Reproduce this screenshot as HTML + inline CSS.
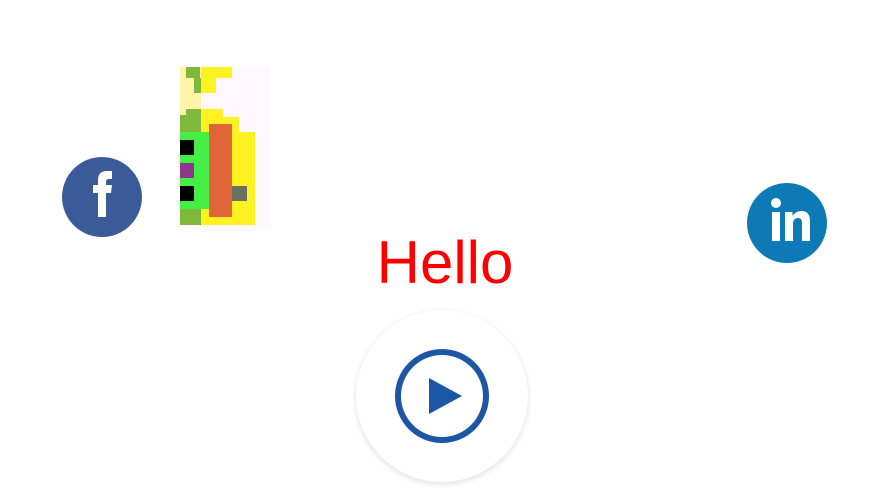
<!DOCTYPE html>
<html><head><style>
html,body{margin:0;padding:0;background:#fff;width:882px;height:504px;overflow:hidden;position:relative;font-family:"Liberation Sans",sans-serif}
.a{position:absolute}
</style></head><body>
<svg class="a" style="left:0;top:0" width="882" height="504" viewBox="0 0 882 504">
<defs><filter id="sh" x="-20%" y="-20%" width="140%" height="140%"><feGaussianBlur stdDeviation="2.5"/></filter></defs>
<!-- pixel art -->
<rect x="180" y="67" width="90" height="160" fill="#fff8fe"/>
<rect x="180" y="67" width="21" height="48" fill="#fff5aa"/>
<rect x="186" y="67" width="14" height="11" fill="#80b83c"/>
<rect x="194" y="78" width="7" height="15" fill="#80b83c"/>
<rect x="201" y="67" width="31" height="11" fill="#fff222"/>
<rect x="201" y="78" width="15" height="15" fill="#fff222"/>
<rect x="180" y="115" width="21" height="17" fill="#80b83c"/>
<rect x="186" y="109" width="15" height="6" fill="#80b83c"/>
<rect x="201" y="109" width="22" height="8" fill="#fff222"/>
<rect x="201" y="117" width="38" height="15" fill="#fff222"/>
<rect x="201" y="132" width="54" height="93" fill="#fff222"/>
<rect x="180" y="132" width="29" height="77" fill="#44ee44"/>
<rect x="180" y="209" width="21" height="16" fill="#80b83c"/>
<rect x="209" y="124" width="23" height="93" fill="#e0663a"/>
<rect x="180" y="140" width="14" height="15" fill="#000"/>
<rect x="180" y="163" width="14" height="15" fill="#8b3a8b"/>
<rect x="180" y="186" width="14" height="15" fill="#000"/>
<rect x="232" y="186" width="15" height="15" fill="#6a7060"/>
<!-- facebook -->
<circle cx="102" cy="197" r="40" fill="#3b5b98"/>
<path d="M98 217V193h-5v-8h5v-5c0-6 3-9 9-9h5v8h-3c-2 0-3 1-3 3v3h6l-1 8h-5v24z" fill="#fff"/>
<!-- linkedin -->
<circle cx="787" cy="223" r="40" fill="#0e7ab5"/>
<rect x="772" y="212" width="8" height="29" fill="#fff"/>
<circle cx="776" cy="203" r="5" fill="#fff"/>
<path d="M785 212h7.5v4c2-3 5-5 9-5 6 0 8.5 4 8.5 10v20h-8v-18c0-3-1-5-4-5s-5 2-5 6v17h-8z" fill="#fff"/>
<!-- play -->
<circle cx="442" cy="398" r="87" fill="#e8e8e8" filter="url(#sh)"/>
<circle cx="442" cy="396" r="86" fill="#fff"/>
<circle cx="442" cy="396" r="44" fill="none" stroke="#1c56a4" stroke-width="6"/>
<path d="M429 378L462 396 429 414z" fill="#1c56a4"/>
<text x="445" y="283" text-anchor="middle" font-family="Liberation Sans, sans-serif" font-size="60" fill="#ff0000">Hello</text>
</svg>
</body></html>
